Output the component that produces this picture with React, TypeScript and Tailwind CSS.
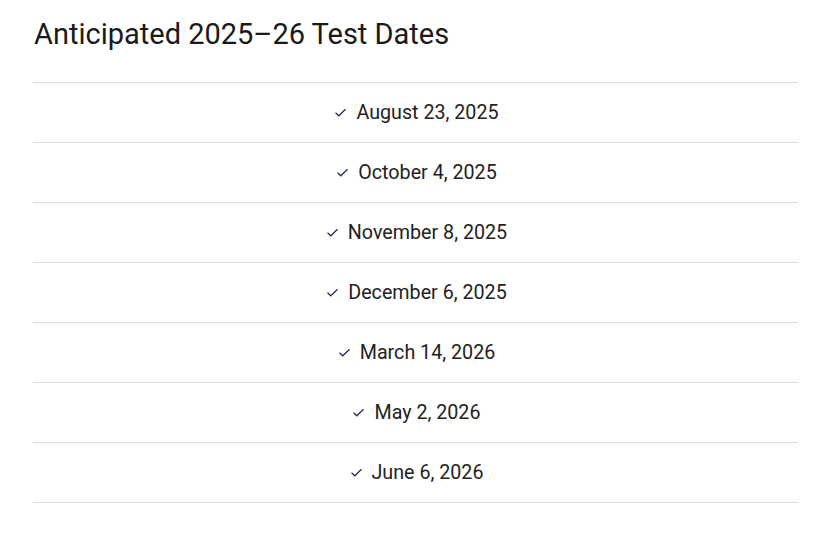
const DATES = [
  "August 23, 2025",
  "October 4, 2025",
  "November 8, 2025",
  "December 6, 2025",
  "March 14, 2026",
  "May 2, 2026",
  "June 6, 2026",
];

function Check() {
  return (
    <svg width="11" height="9" viewBox="0 0 11 9" fill="none" className="shrink-0">
      <path d="M0.5 4.8 L3.8 7.8 L10.5 1.2" stroke="#1e2b4a" strokeWidth="1.2" />
    </svg>
  );
}

export default function App() {
  return (
    <div className="min-h-screen bg-white pl-[33px] pr-[30px] pt-[16px] font-['Roboto',sans-serif] text-[#222]">
      <h1 className="pl-px text-[29px] leading-[36px] font-normal text-[#1a1a1a]">
        Anticipated 2025–26 Test Dates
      </h1>
      <ul className="mt-[30px] border-t border-[#dcdcdc]">
        {DATES.map((d) => (
          <li
            key={d}
            className="flex h-[60px] items-center justify-center gap-[10px] border-b border-[#dcdcdc] pl-[3px] text-[19.7px]"
          >
            <Check />
            <span>{d}</span>
          </li>
        ))}
      </ul>
    </div>
  );
}
